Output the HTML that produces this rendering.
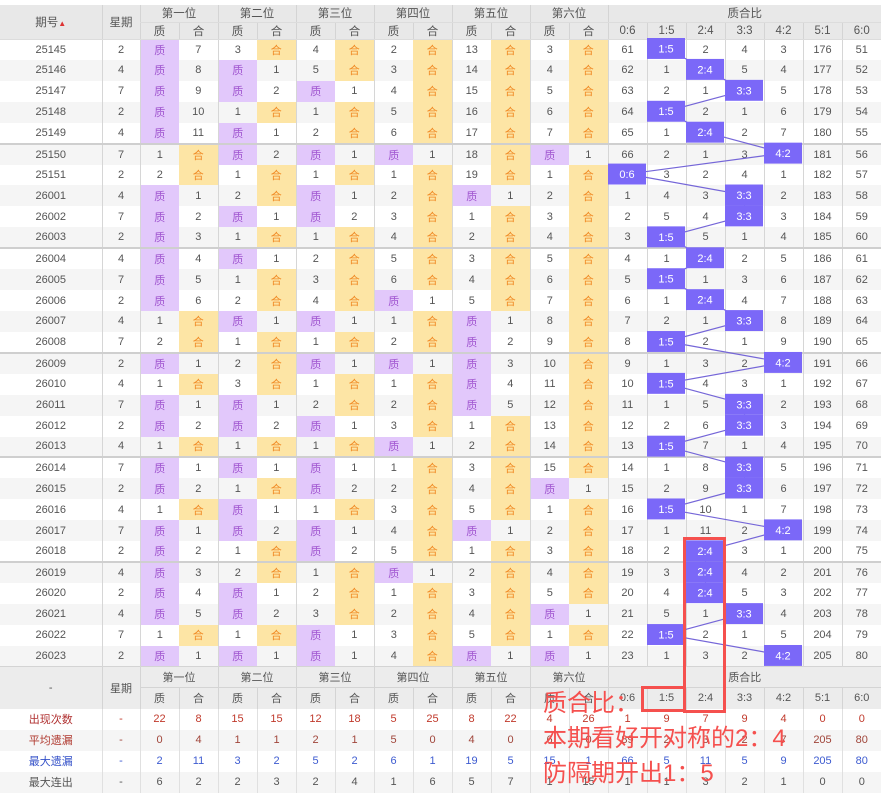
<!DOCTYPE html>
<html><head><meta charset="utf-8">
<style>
*{margin:0;padding:0;box-sizing:border-box}
body{width:881px;height:792px;overflow:hidden;background:#fff;font-family:"Liberation Sans","Noto Sans CJK SC",sans-serif;position:relative}
table{position:absolute;left:0;top:5px;width:881px;border-collapse:collapse;table-layout:fixed;font-size:11px;color:#555}
td,th{text-align:center;padding:0;overflow:hidden;white-space:nowrap;font-weight:normal}
thead th{background:#e8e8e8;color:#555;font-size:11.5px;border-left:1px solid #d4d4d4;border-bottom:1px solid #dcdcdc}
thead tr.a{height:17px}thead tr.b{height:16px}
tbody tr{height:20.93px}
tbody tr:nth-child(even){background:#f5f5f5}
tbody td:nth-child(2),tbody td:nth-child(3),tbody td:nth-child(5),tbody td:nth-child(7),tbody td:nth-child(9),tbody td:nth-child(11),tbody td:nth-child(13),tbody td:nth-child(n+15){border-left:1px solid #d6d6d6}
tr.g td{border-top:2px solid #cfcfcf}
.q{background:#e2c8fb;color:#a055d0}
.h{background:#fde5a5;color:#f08a24}
tfoot th{background:#ececec;color:#555;font-size:11px;border-left:1px solid #d4d4d4;border-top:1px solid #d4d4d4}
tfoot tr.a,tfoot tr.b{height:21px}
tfoot tr.s{height:21px}
tfoot tr.s td{border-left:1px solid #e0e0e0}
tfoot tr.s:nth-child(even){background:#f5f5f5}
.c1 td{color:#c0392b}.c2 td{color:#a0453a}.c3 td{color:#3d5bd0}.c4 td{color:#555}
.c1 td:first-child{color:#b03030}.c2 td:first-child{color:#b03a30}.c3 td:first-child{color:#3350c8}
.ann{position:absolute;left:543px;color:#f5504e;font-size:24px;line-height:35px;font-family:"Liberation Sans","Noto Sans CJK SC",sans-serif;white-space:nowrap}
.box{position:absolute;border:3.5px solid #f5504e}
</style></head><body>
<table>
<colgroup><col style="width:102px"><col style="width:38px">
<col style="width:39px"><col style="width:39px"><col style="width:39px"><col style="width:39px"><col style="width:39px"><col style="width:39px"><col style="width:39px"><col style="width:39px"><col style="width:39px"><col style="width:39px"><col style="width:39px"><col style="width:39px">
<col style="width:39px"><col style="width:39px"><col style="width:39px"><col style="width:39px"><col style="width:39px"><col style="width:39px"><col style="width:39px"></colgroup>
<thead>
<tr class="a"><th rowspan="2" style="border-left:none">期号<span style="font-size:8px;color:#d33">▲</span></th><th rowspan="2">星期</th><th colspan="2">第一位</th><th colspan="2">第二位</th><th colspan="2">第三位</th><th colspan="2">第四位</th><th colspan="2">第五位</th><th colspan="2">第六位</th><th colspan="7">质合比</th></tr>
<tr class="b"><th>质</th><th>合</th><th>质</th><th>合</th><th>质</th><th>合</th><th>质</th><th>合</th><th>质</th><th>合</th><th>质</th><th>合</th><th>0:6</th><th>1:5</th><th>2:4</th><th>3:3</th><th>4:2</th><th>5:1</th><th>6:0</th></tr>
</thead>
<tbody>
<tr><td>25145</td><td>2</td><td class=q>质</td><td>7</td><td>3</td><td class=h>合</td><td>4</td><td class=h>合</td><td>2</td><td class=h>合</td><td>13</td><td class=h>合</td><td>3</td><td class=h>合</td><td>61</td><td></td><td>2</td><td>4</td><td>3</td><td>176</td><td>51</td></tr>
<tr><td>25146</td><td>4</td><td class=q>质</td><td>8</td><td class=q>质</td><td>1</td><td>5</td><td class=h>合</td><td>3</td><td class=h>合</td><td>14</td><td class=h>合</td><td>4</td><td class=h>合</td><td>62</td><td>1</td><td></td><td>5</td><td>4</td><td>177</td><td>52</td></tr>
<tr><td>25147</td><td>7</td><td class=q>质</td><td>9</td><td class=q>质</td><td>2</td><td class=q>质</td><td>1</td><td>4</td><td class=h>合</td><td>15</td><td class=h>合</td><td>5</td><td class=h>合</td><td>63</td><td>2</td><td>1</td><td></td><td>5</td><td>178</td><td>53</td></tr>
<tr><td>25148</td><td>2</td><td class=q>质</td><td>10</td><td>1</td><td class=h>合</td><td>1</td><td class=h>合</td><td>5</td><td class=h>合</td><td>16</td><td class=h>合</td><td>6</td><td class=h>合</td><td>64</td><td></td><td>2</td><td>1</td><td>6</td><td>179</td><td>54</td></tr>
<tr><td>25149</td><td>4</td><td class=q>质</td><td>11</td><td class=q>质</td><td>1</td><td>2</td><td class=h>合</td><td>6</td><td class=h>合</td><td>17</td><td class=h>合</td><td>7</td><td class=h>合</td><td>65</td><td>1</td><td></td><td>2</td><td>7</td><td>180</td><td>55</td></tr>
<tr class=g><td>25150</td><td>7</td><td>1</td><td class=h>合</td><td class=q>质</td><td>2</td><td class=q>质</td><td>1</td><td class=q>质</td><td>1</td><td>18</td><td class=h>合</td><td class=q>质</td><td>1</td><td>66</td><td>2</td><td>1</td><td>3</td><td></td><td>181</td><td>56</td></tr>
<tr><td>25151</td><td>2</td><td>2</td><td class=h>合</td><td>1</td><td class=h>合</td><td>1</td><td class=h>合</td><td>1</td><td class=h>合</td><td>19</td><td class=h>合</td><td>1</td><td class=h>合</td><td></td><td>3</td><td>2</td><td>4</td><td>1</td><td>182</td><td>57</td></tr>
<tr><td>26001</td><td>4</td><td class=q>质</td><td>1</td><td>2</td><td class=h>合</td><td class=q>质</td><td>1</td><td>2</td><td class=h>合</td><td class=q>质</td><td>1</td><td>2</td><td class=h>合</td><td>1</td><td>4</td><td>3</td><td></td><td>2</td><td>183</td><td>58</td></tr>
<tr><td>26002</td><td>7</td><td class=q>质</td><td>2</td><td class=q>质</td><td>1</td><td class=q>质</td><td>2</td><td>3</td><td class=h>合</td><td>1</td><td class=h>合</td><td>3</td><td class=h>合</td><td>2</td><td>5</td><td>4</td><td></td><td>3</td><td>184</td><td>59</td></tr>
<tr><td>26003</td><td>2</td><td class=q>质</td><td>3</td><td>1</td><td class=h>合</td><td>1</td><td class=h>合</td><td>4</td><td class=h>合</td><td>2</td><td class=h>合</td><td>4</td><td class=h>合</td><td>3</td><td></td><td>5</td><td>1</td><td>4</td><td>185</td><td>60</td></tr>
<tr class=g><td>26004</td><td>4</td><td class=q>质</td><td>4</td><td class=q>质</td><td>1</td><td>2</td><td class=h>合</td><td>5</td><td class=h>合</td><td>3</td><td class=h>合</td><td>5</td><td class=h>合</td><td>4</td><td>1</td><td></td><td>2</td><td>5</td><td>186</td><td>61</td></tr>
<tr><td>26005</td><td>7</td><td class=q>质</td><td>5</td><td>1</td><td class=h>合</td><td>3</td><td class=h>合</td><td>6</td><td class=h>合</td><td>4</td><td class=h>合</td><td>6</td><td class=h>合</td><td>5</td><td></td><td>1</td><td>3</td><td>6</td><td>187</td><td>62</td></tr>
<tr><td>26006</td><td>2</td><td class=q>质</td><td>6</td><td>2</td><td class=h>合</td><td>4</td><td class=h>合</td><td class=q>质</td><td>1</td><td>5</td><td class=h>合</td><td>7</td><td class=h>合</td><td>6</td><td>1</td><td></td><td>4</td><td>7</td><td>188</td><td>63</td></tr>
<tr><td>26007</td><td>4</td><td>1</td><td class=h>合</td><td class=q>质</td><td>1</td><td class=q>质</td><td>1</td><td>1</td><td class=h>合</td><td class=q>质</td><td>1</td><td>8</td><td class=h>合</td><td>7</td><td>2</td><td>1</td><td></td><td>8</td><td>189</td><td>64</td></tr>
<tr><td>26008</td><td>7</td><td>2</td><td class=h>合</td><td>1</td><td class=h>合</td><td>1</td><td class=h>合</td><td>2</td><td class=h>合</td><td class=q>质</td><td>2</td><td>9</td><td class=h>合</td><td>8</td><td></td><td>2</td><td>1</td><td>9</td><td>190</td><td>65</td></tr>
<tr class=g><td>26009</td><td>2</td><td class=q>质</td><td>1</td><td>2</td><td class=h>合</td><td class=q>质</td><td>1</td><td class=q>质</td><td>1</td><td class=q>质</td><td>3</td><td>10</td><td class=h>合</td><td>9</td><td>1</td><td>3</td><td>2</td><td></td><td>191</td><td>66</td></tr>
<tr><td>26010</td><td>4</td><td>1</td><td class=h>合</td><td>3</td><td class=h>合</td><td>1</td><td class=h>合</td><td>1</td><td class=h>合</td><td class=q>质</td><td>4</td><td>11</td><td class=h>合</td><td>10</td><td></td><td>4</td><td>3</td><td>1</td><td>192</td><td>67</td></tr>
<tr><td>26011</td><td>7</td><td class=q>质</td><td>1</td><td class=q>质</td><td>1</td><td>2</td><td class=h>合</td><td>2</td><td class=h>合</td><td class=q>质</td><td>5</td><td>12</td><td class=h>合</td><td>11</td><td>1</td><td>5</td><td></td><td>2</td><td>193</td><td>68</td></tr>
<tr><td>26012</td><td>2</td><td class=q>质</td><td>2</td><td class=q>质</td><td>2</td><td class=q>质</td><td>1</td><td>3</td><td class=h>合</td><td>1</td><td class=h>合</td><td>13</td><td class=h>合</td><td>12</td><td>2</td><td>6</td><td></td><td>3</td><td>194</td><td>69</td></tr>
<tr><td>26013</td><td>4</td><td>1</td><td class=h>合</td><td>1</td><td class=h>合</td><td>1</td><td class=h>合</td><td class=q>质</td><td>1</td><td>2</td><td class=h>合</td><td>14</td><td class=h>合</td><td>13</td><td></td><td>7</td><td>1</td><td>4</td><td>195</td><td>70</td></tr>
<tr class=g><td>26014</td><td>7</td><td class=q>质</td><td>1</td><td class=q>质</td><td>1</td><td class=q>质</td><td>1</td><td>1</td><td class=h>合</td><td>3</td><td class=h>合</td><td>15</td><td class=h>合</td><td>14</td><td>1</td><td>8</td><td></td><td>5</td><td>196</td><td>71</td></tr>
<tr><td>26015</td><td>2</td><td class=q>质</td><td>2</td><td>1</td><td class=h>合</td><td class=q>质</td><td>2</td><td>2</td><td class=h>合</td><td>4</td><td class=h>合</td><td class=q>质</td><td>1</td><td>15</td><td>2</td><td>9</td><td></td><td>6</td><td>197</td><td>72</td></tr>
<tr><td>26016</td><td>4</td><td>1</td><td class=h>合</td><td class=q>质</td><td>1</td><td>1</td><td class=h>合</td><td>3</td><td class=h>合</td><td>5</td><td class=h>合</td><td>1</td><td class=h>合</td><td>16</td><td></td><td>10</td><td>1</td><td>7</td><td>198</td><td>73</td></tr>
<tr><td>26017</td><td>7</td><td class=q>质</td><td>1</td><td class=q>质</td><td>2</td><td class=q>质</td><td>1</td><td>4</td><td class=h>合</td><td class=q>质</td><td>1</td><td>2</td><td class=h>合</td><td>17</td><td>1</td><td>11</td><td>2</td><td></td><td>199</td><td>74</td></tr>
<tr><td>26018</td><td>2</td><td class=q>质</td><td>2</td><td>1</td><td class=h>合</td><td class=q>质</td><td>2</td><td>5</td><td class=h>合</td><td>1</td><td class=h>合</td><td>3</td><td class=h>合</td><td>18</td><td>2</td><td></td><td>3</td><td>1</td><td>200</td><td>75</td></tr>
<tr class=g><td>26019</td><td>4</td><td class=q>质</td><td>3</td><td>2</td><td class=h>合</td><td>1</td><td class=h>合</td><td class=q>质</td><td>1</td><td>2</td><td class=h>合</td><td>4</td><td class=h>合</td><td>19</td><td>3</td><td></td><td>4</td><td>2</td><td>201</td><td>76</td></tr>
<tr><td>26020</td><td>2</td><td class=q>质</td><td>4</td><td class=q>质</td><td>1</td><td>2</td><td class=h>合</td><td>1</td><td class=h>合</td><td>3</td><td class=h>合</td><td>5</td><td class=h>合</td><td>20</td><td>4</td><td></td><td>5</td><td>3</td><td>202</td><td>77</td></tr>
<tr><td>26021</td><td>4</td><td class=q>质</td><td>5</td><td class=q>质</td><td>2</td><td>3</td><td class=h>合</td><td>2</td><td class=h>合</td><td>4</td><td class=h>合</td><td class=q>质</td><td>1</td><td>21</td><td>5</td><td>1</td><td></td><td>4</td><td>203</td><td>78</td></tr>
<tr><td>26022</td><td>7</td><td>1</td><td class=h>合</td><td>1</td><td class=h>合</td><td class=q>质</td><td>1</td><td>3</td><td class=h>合</td><td>5</td><td class=h>合</td><td>1</td><td class=h>合</td><td>22</td><td></td><td>2</td><td>1</td><td>5</td><td>204</td><td>79</td></tr>
<tr><td>26023</td><td>2</td><td class=q>质</td><td>1</td><td class=q>质</td><td>1</td><td class=q>质</td><td>1</td><td>4</td><td class=h>合</td><td class=q>质</td><td>1</td><td class=q>质</td><td>1</td><td>23</td><td>1</td><td>3</td><td>2</td><td></td><td>205</td><td>80</td></tr>
</tbody>
<tfoot>
<tr class="a"><th rowspan="2" style="border-left:none">-</th><th rowspan="2">星期</th><th colspan="2">第一位</th><th colspan="2">第二位</th><th colspan="2">第三位</th><th colspan="2">第四位</th><th colspan="2">第五位</th><th colspan="2">第六位</th><th colspan="7">质合比</th></tr>
<tr class="b"><th>质</th><th>合</th><th>质</th><th>合</th><th>质</th><th>合</th><th>质</th><th>合</th><th>质</th><th>合</th><th>质</th><th>合</th><th>0:6</th><th>1:5</th><th>2:4</th><th>3:3</th><th>4:2</th><th>5:1</th><th>6:0</th></tr>
<tr class="s c1"><td style="border-left:none">出现次数</td><td>-</td><td>22</td><td>8</td><td>15</td><td>15</td><td>12</td><td>18</td><td>5</td><td>25</td><td>8</td><td>22</td><td>4</td><td>26</td><td>1</td><td>9</td><td>7</td><td>9</td><td>4</td><td>0</td><td>0</td></tr>
<tr class="s c2"><td style="border-left:none">平均遗漏</td><td>-</td><td>0</td><td>4</td><td>1</td><td>1</td><td>2</td><td>1</td><td>5</td><td>0</td><td>4</td><td>0</td><td>6</td><td>0</td><td>89</td><td>2</td><td>3</td><td>2</td><td>7</td><td>205</td><td>80</td></tr>
<tr class="s c3"><td style="border-left:none">最大遗漏</td><td>-</td><td>2</td><td>11</td><td>3</td><td>2</td><td>5</td><td>2</td><td>6</td><td>1</td><td>19</td><td>5</td><td>15</td><td>1</td><td>66</td><td>5</td><td>11</td><td>5</td><td>9</td><td>205</td><td>80</td></tr>
<tr class="s c4"><td style="border-left:none">最大连出</td><td>-</td><td>6</td><td>2</td><td>2</td><td>3</td><td>2</td><td>4</td><td>1</td><td>6</td><td>5</td><td>7</td><td>1</td><td>15</td><td>1</td><td>1</td><td>3</td><td>2</td><td>1</td><td>0</td><td>0</td></tr>
</tfoot>
</table>
<svg width="881" height="792" style="position:absolute;left:0;top:0" font-family="Liberation Sans, sans-serif" font-size="11">
<g transform="translate(0,38) scale(1,0.9967) translate(0,-38)">
<polyline fill="none" stroke="#7566d8" stroke-width="1.2" points="666.5,48.5 705.5,69.5 744.5,90.5 666.5,111.5 705.5,132.5 783.5,153.5 627.5,174.5 744.5,195.5 744.5,216.5 666.5,237.5 705.5,258.5 666.5,279.5 705.5,300.5 744.5,321.5 666.5,342.5 783.5,363.5 666.5,384.5 744.5,405.5 744.5,426.5 666.5,447.5 744.5,468.5 744.5,489.5 666.5,510.5 783.5,531.5 705.5,552.5 705.5,573.5 705.5,594.5 744.5,615.5 666.5,636.5 783.5,657.5"/>
<g fill="#7b68f8">
<rect x="647" y="38" width="38" height="21"/><rect x="686" y="59" width="38" height="21"/><rect x="725" y="80" width="38" height="21"/><rect x="647" y="101" width="38" height="21"/><rect x="686" y="122" width="38" height="21"/>
<rect x="764" y="143" width="38" height="21"/><rect x="608" y="164" width="38" height="21"/><rect x="725" y="185" width="38" height="21"/><rect x="725" y="206" width="38" height="21"/><rect x="647" y="227" width="38" height="21"/>
<rect x="686" y="248" width="38" height="21"/><rect x="647" y="269" width="38" height="21"/><rect x="686" y="290" width="38" height="21"/><rect x="725" y="311" width="38" height="21"/><rect x="647" y="332" width="38" height="21"/>
<rect x="764" y="353" width="38" height="21"/><rect x="647" y="374" width="38" height="21"/><rect x="725" y="395" width="38" height="21"/><rect x="725" y="416" width="38" height="21"/><rect x="647" y="437" width="38" height="21"/>
<rect x="725" y="458" width="38" height="21"/><rect x="725" y="479" width="38" height="21"/><rect x="647" y="500" width="38" height="21"/><rect x="764" y="521" width="38" height="21"/><rect x="686" y="542" width="38" height="21"/>
<rect x="686" y="563" width="38" height="21"/><rect x="686" y="584" width="38" height="21"/><rect x="725" y="605" width="38" height="21"/><rect x="647" y="626" width="38" height="21"/><rect x="764" y="647" width="38" height="21"/>
</g>
<g fill="#fff" text-anchor="middle">
<text x="666" y="52.5">1:5</text><text x="705" y="73.5">2:4</text><text x="744" y="94.5">3:3</text><text x="666" y="115.5">1:5</text><text x="705" y="136.5">2:4</text>
<text x="783" y="157.5">4:2</text><text x="627" y="178.5">0:6</text><text x="744" y="199.5">3:3</text><text x="744" y="220.5">3:3</text><text x="666" y="241.5">1:5</text>
<text x="705" y="262.5">2:4</text><text x="666" y="283.5">1:5</text><text x="705" y="304.5">2:4</text><text x="744" y="325.5">3:3</text><text x="666" y="346.5">1:5</text>
<text x="783" y="367.5">4:2</text><text x="666" y="388.5">1:5</text><text x="744" y="409.5">3:3</text><text x="744" y="430.5">3:3</text><text x="666" y="451.5">1:5</text>
<text x="744" y="472.5">3:3</text><text x="744" y="493.5">3:3</text><text x="666" y="514.5">1:5</text><text x="783" y="535.5">4:2</text><text x="705" y="556.5">2:4</text>
<text x="705" y="577.5">2:4</text><text x="705" y="598.5">2:4</text><text x="744" y="619.5">3:3</text><text x="666" y="640.5">1:5</text><text x="783" y="661.5">4:2</text>
</g>
</g>
</svg>
<div class="box" style="left:683px;top:537px;width:43px;height:176px"></div>
<div class="box" style="left:641px;top:686px;width:45px;height:26px"></div>
<div class="ann" style="top:686px">质合比：</div>
<div class="ann" style="top:721px">本期看好开对称的2：4</div>
<div class="ann" style="top:756px">防隔期开出1：5</div>
</body></html>
